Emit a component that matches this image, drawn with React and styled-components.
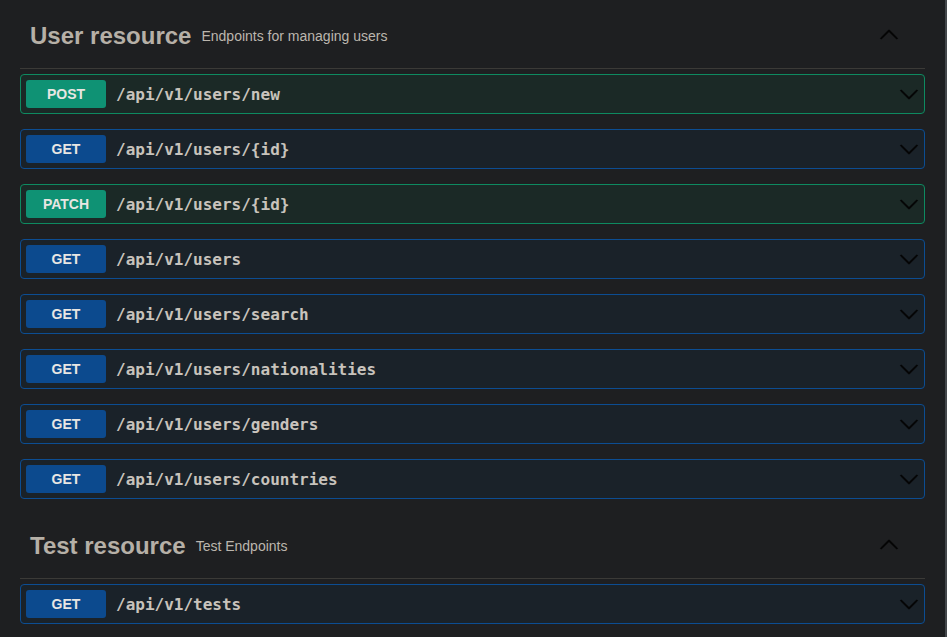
import styled, { createGlobalStyle } from "styled-components"

const GlobalStyle = createGlobalStyle`
	html, body {
		margin: 0;
		padding: 0;
		background: #1e1f21;
		overflow: hidden;
	}
`

const methodColors = {
	post: { badge: "#0f9274", border: "#0e8a60", bg: "#1b2926" },
	patch: { badge: "#0f9274", border: "#0e8a60", bg: "#1b2926" },
	get: { badge: "#0c4a8e", border: "#0c4d92", bg: "#1a2229" },
}

const Screen = styled.div`
	display: flex;
	height: 637px;
	width: 947px;
	background: #1e1f21;
`

const Wrapper = styled.div`
	flex: 1;
	padding: 4px 20px 0 20px;
	font-family: "Liberation Sans", Arial, sans-serif;
`

const Scrollbar = styled.div`
	width: 2px;
	background: #43474b;
`

const Section = styled.section`
	display: flex;
	flex-direction: column;
	padding-top: 1px;
`

const TagHeader = styled.div`
	display: flex;
	align-items: center;
	box-sizing: border-box;
	height: 64px;
	padding: 0 26px 2px 10px;
	margin-bottom: 5px;
	border-bottom: 1px solid #3b3a37;
`

const TagTitle = styled.h3`
	margin: 0;
	font-size: 24px;
	font-weight: 700;
	color: #b6b0a7;
`

const TagDesc = styled.small`
	flex: 1;
	margin-left: 10px;
	font-size: 14px;
	color: #bcb6ae;
`

const Arrow = styled.svg`
	width: 20px;
	height: 20px;
	flex: none;
	margin-top: ${(p) => (p.$up ? "-4px" : "0")};
	fill: #050505;
	stroke: #050505;
	stroke-width: 0.5;
`

const Opblock = styled.div`
	display: flex;
	align-items: center;
	box-sizing: border-box;
	height: 40px;
	padding: 5px;
	margin-bottom: 15px;
	border: 1px solid ${(p) => methodColors[p.$method].border};
	border-radius: 4px;
	background: ${(p) => methodColors[p.$method].bg};
`

const Method = styled.span`
	display: flex;
	align-items: center;
	justify-content: center;
	width: 80px;
	height: 28px;
	border-radius: 3px;
	background: ${(p) => methodColors[p.$method].badge};
	color: #e8e6e3;
	font-size: 14px;
	font-weight: 700;
`

const Path = styled.span`
	flex: 1;
	padding: 0 10px;
	font-family: "DejaVu Sans Mono", "Liberation Mono", monospace;
	font-size: 16px;
	font-weight: 700;
	color: #c8c3bc;
`

const ChevronDown = () => (
	<Arrow viewBox="0 0 20 20">
		<path d="M17.418 6.109c.272-.268.709-.268.979 0s.271.701 0 .969l-7.908 7.83c-.27.268-.707.268-.979 0l-7.908-7.83c-.27-.268-.27-.701 0-.969.271-.268.709-.268.979 0L10 13.25l7.418-7.141z" />
	</Arrow>
)

const ChevronUp = () => (
	<Arrow $up viewBox="0 0 20 20">
		<path d="M17.418 14.891c.272.268.709.268.979 0s.271-.701 0-.969l-7.908-7.83c-.27-.268-.707-.268-.979 0l-7.908 7.83c-.27.268-.27.701 0 .969.271.268.709.268.979 0L10 7.75l7.418 7.141z" />
	</Arrow>
)

const sections = [
	{
		title: "User resource",
		desc: "Endpoints for managing users",
		ops: [
			["post", "POST", "/api/v1/users/new"],
			["get", "GET", "/api/v1/users/{id}"],
			["patch", "PATCH", "/api/v1/users/{id}"],
			["get", "GET", "/api/v1/users"],
			["get", "GET", "/api/v1/users/search"],
			["get", "GET", "/api/v1/users/nationalities"],
			["get", "GET", "/api/v1/users/genders"],
			["get", "GET", "/api/v1/users/countries"],
		],
	},
	{
		title: "Test resource",
		desc: "Test Endpoints",
		ops: [["get", "GET", "/api/v1/tests"]],
	},
]

const App = () => {
	return (
		<Screen>
			<GlobalStyle />
			<Wrapper>
				{sections.map((s) => (
					<Section key={s.title}>
						<TagHeader>
							<TagTitle>{s.title}</TagTitle>
							<TagDesc>{s.desc}</TagDesc>
							<ChevronUp />
						</TagHeader>
						{s.ops.map(([m, label, path]) => (
							<Opblock key={label + path} $method={m}>
								<Method $method={m}>{label}</Method>
								<Path>{path}</Path>
								<ChevronDown />
							</Opblock>
						))}
					</Section>
				))}
			</Wrapper>
			<Scrollbar />
		</Screen>
	)
}

export default App
